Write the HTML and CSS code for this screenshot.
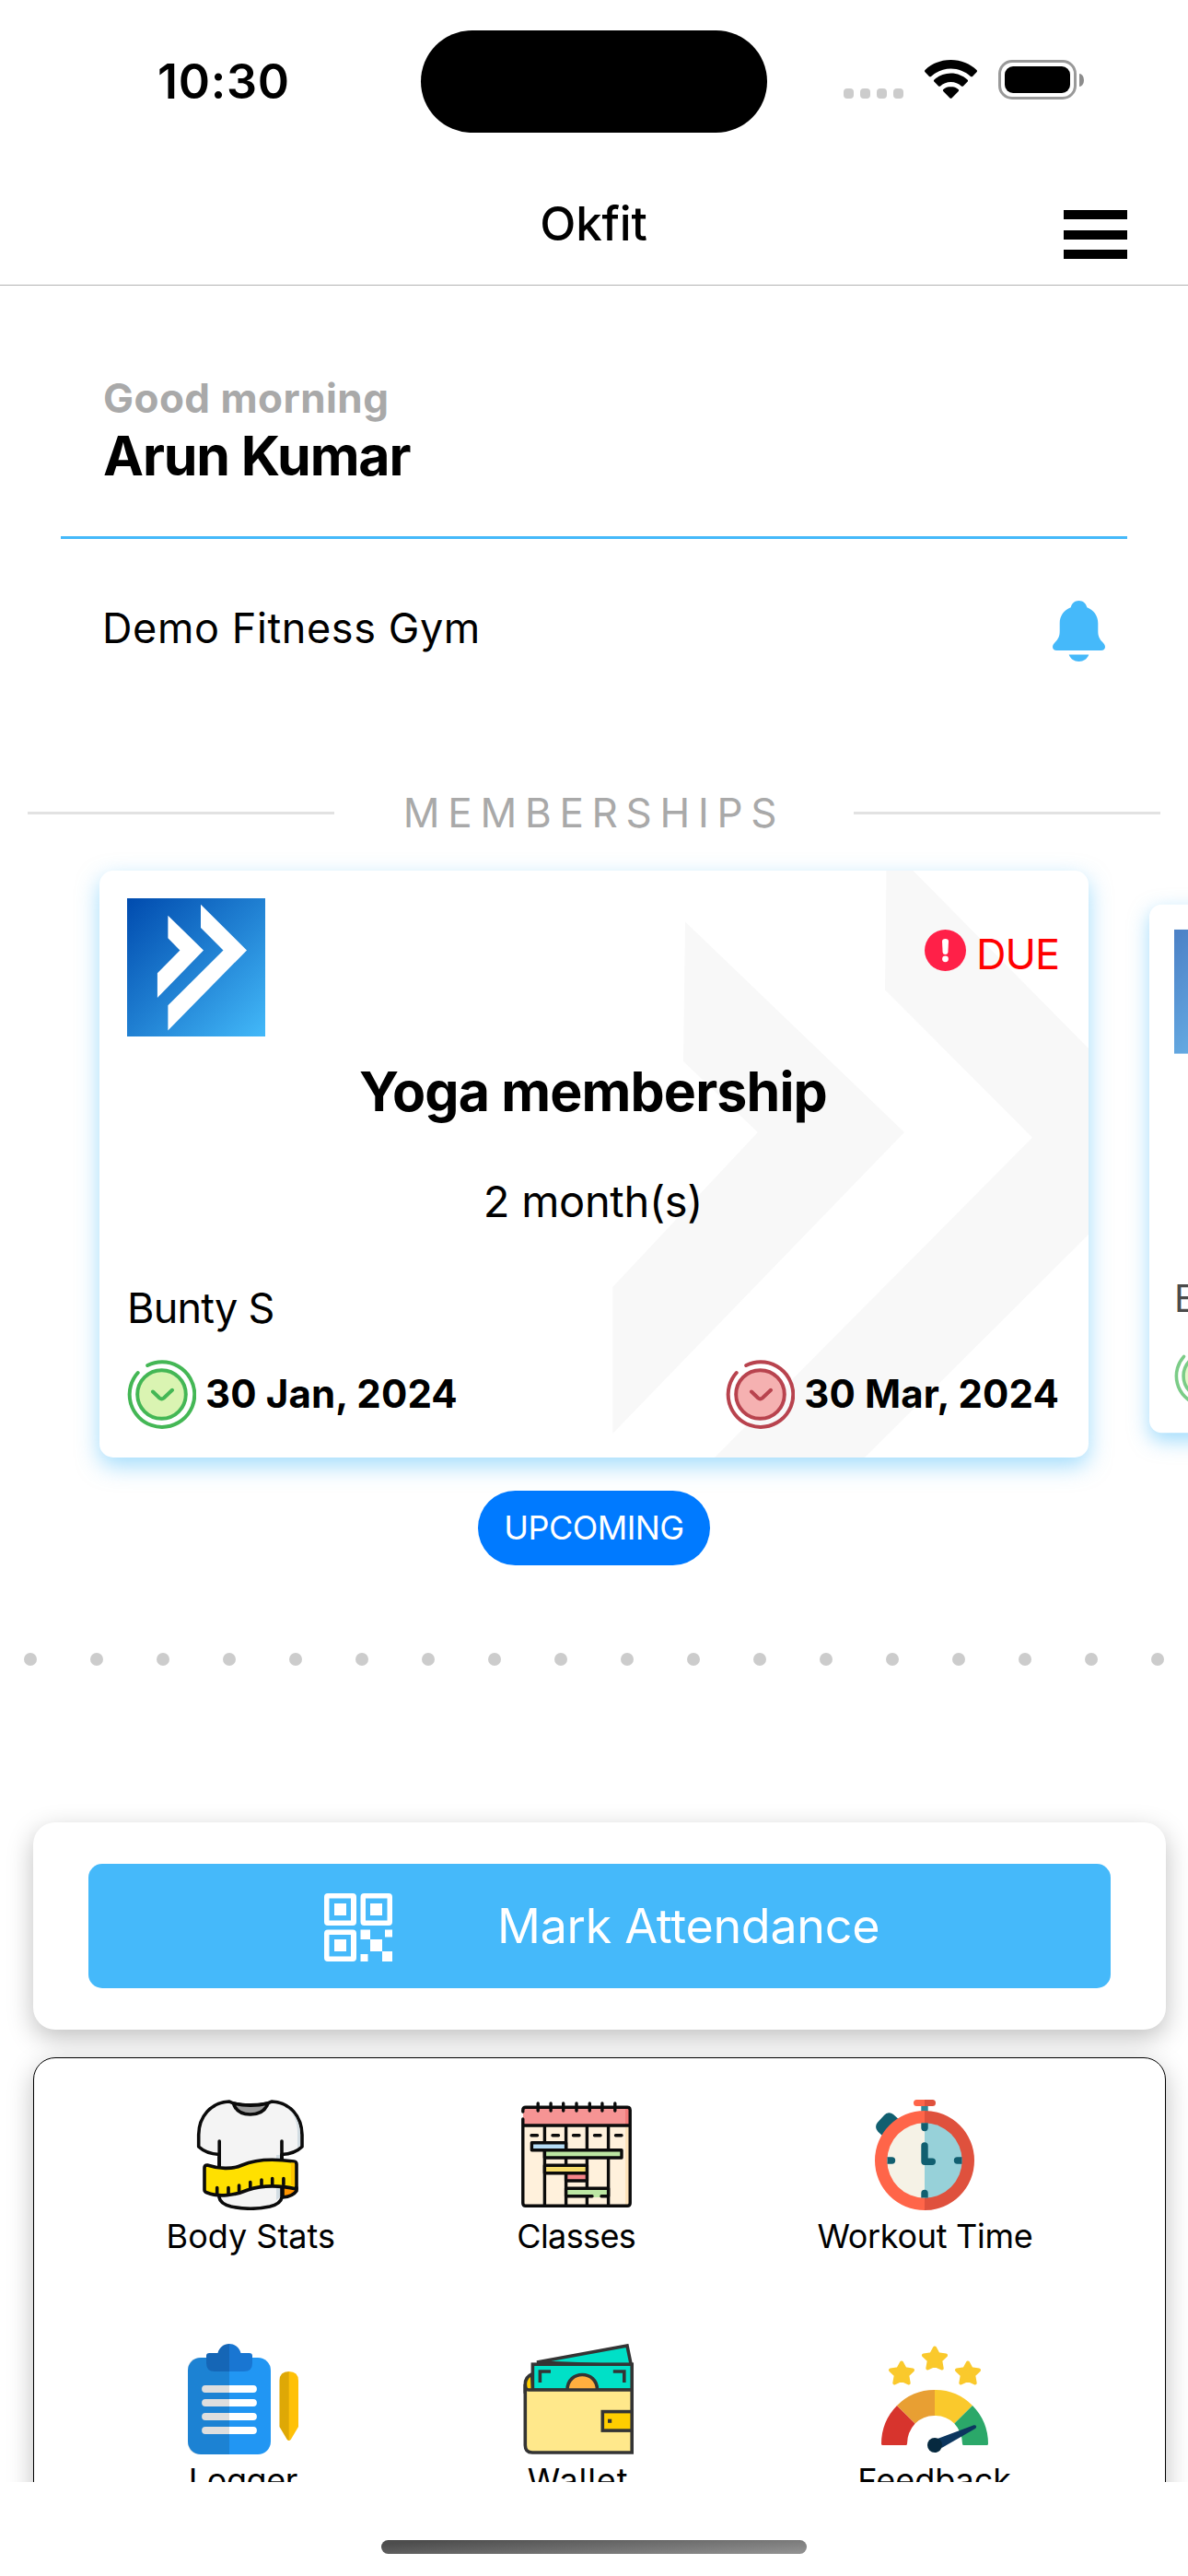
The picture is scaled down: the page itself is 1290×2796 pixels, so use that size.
FILE: index.html
```html
<!DOCTYPE html>
<html lang="en">
<head>
<meta charset="utf-8">
<title>Okfit</title>
<link rel="stylesheet" href="styles.css">
</head>
<body>
<svg class="defs" width="0" height="0" aria-hidden="true">
  <defs>
    <linearGradient id="brand" x1="0" y1="0" x2="1" y2="1">
      <stop offset="0" stop-color="#004bae"/><stop offset=".5" stop-color="#2080d2"/><stop offset="1" stop-color="#43b9f9"/>
    </linearGradient>
    <symbol id="logo" viewBox="0 0 150 150">
      <rect width="150" height="150" fill="url(#brand)"/>
      <path fill="#fff" d="M44.4 18.8 83 56.4 32.9 108.1V81.2L57.4 56.4 44.4 43.2ZM80 6.8 130 56.4 44.4 143.6V116.2L104.5 56.4 80 32Z"/>
    </symbol>
    <symbol id="check" viewBox="0 0 75 75">
      <circle class="check-face" cx="37.5" cy="37.5" r="26.3"/>
      <path d="M22.2 6A35.3 35.3 0 1 1 11.7 14M28 34.5l7.2 7q2.3 1.8 4.6 0l9.2-8.7"/>
    </symbol>
  </defs>
</svg>

<header class="status">
  <div class="status-time">10:30</div>
  <div class="island"></div>
  <div class="status-icons">
    <div class="cell"><i></i><i></i><i></i><i></i></div>
    <svg class="wifi" viewBox="0 0 57 42">
      <path d="M28.500 0C17.500 0 7.500 4.200 .5 11q-1 1.200 0 2.300L5 18q1 .7 2 0C13 12.500 20.500 9.500 28.500 9.500S44 12.500 50 18q1 .7 2 0l4.500-4.700q1-1.100 0-2.300C49.500 4.200 39.500 0 28.500 0Z"/>
      <path d="M28.500 14.500c-7 0-13.300 2.700-18 7-.8.8-.8 1.500 0 2.300l4.600 4.600q1 .8 2 0c3-2.700 7-4.300 11.400-4.300s8.400 1.600 11.400 4.300q1 .8 2 0l4.600-4.600c.8-.8.8-1.500 0-2.300-4.700-4.300-11-7-18-7Z"/>
      <path d="M28.500 29c-3.200 0-6 1.100-8.100 2.900-.8.8-.7 1.600 0 2.300l7.100 7.200q1 .9 2 0l7.100-7.200c.7-.7.8-1.500 0-2.300-2.100-1.800-4.900-2.900-8.100-2.900Z"/>
    </svg>
    <div class="battery"><div class="battery-case"><div class="battery-level"></div></div><div class="battery-cap"></div></div>
  </div>
</header>

<nav class="topbar">
  <h1>Okfit</h1>
  <div class="menu"><i></i><i></i><i></i></div>
</nav>

<main class="content">
  <section class="greeting">
    <p class="hello">Good morning</p>
    <p class="name">Arun Kumar</p>
  </section>
  <section class="gym">
    <p>Demo Fitness Gym</p>
    <svg class="bell" viewBox="0 0 57 66">
      <path d="M28.500 0c-4.300 0-7.800 2.800-8.800 7.200C12.500 9.800 7.700 16.500 7.700 24.500v8.500c0 5.500-1.500 8.500-4.900 12C.8 47 0 48.700 0 50.200 0 52.600 1.800 54 4.300 54h48.400c2.500 0 4.300-1.400 4.300-3.800 0-1.500-.8-3.200-2.800-5.200-3.400-3.500-4.900-6.500-4.900-12v-8.500c0-8-4.800-14.700-12-17.300C36.300 2.800 32.800 0 28.500 0Z"/>
      <path d="M17.700 58.500h21.600c-1.600 4.600-5.800 7.500-10.800 7.500s-9.200-2.900-10.800-7.500Z"/>
    </svg>
  </section>

  <h2 class="divider"><span>MEMBERSHIPS</span></h2>

  <section class="carousel">
    <article class="card">
      <svg class="watermark" viewBox="0 0 1074 637">
        <path d="M636 55.500 874 284 557.300 611V452L714.800 284 634 207ZM854.500 0H883.500L1074 193V395L831 637H668L1013 289.700 853 129.400Z"/>
      </svg>
      <div class="card-top">
        <svg class="logo"><use href="#logo"/></svg>
        <div class="due">
          <svg viewBox="0 0 45 45"><circle cx="22.500" cy="22.500" r="22.500" fill="#ff2048"/><path d="M19 12.500q0-2.500 3.500-2.500t3.500 2.500l-.6 12.300q-.3 2.200-2.900 2.200t-2.900-2.200Z" fill="#fff"/><circle cx="22.500" cy="31.800" r="3.400" fill="#fff"/></svg>
          <span>DUE</span>
        </div>
      </div>
      <h3>Yoga membership</h3>
      <p class="period">2 month(s)</p>
      <p class="trainer">Bunty S</p>
      <div class="dates">
        <div class="date start"><svg><use href="#check"/></svg><span>30 Jan, 2024</span></div>
        <div class="date end"><svg><use href="#check"/></svg><span>30 Mar, 2024</span></div>
      </div>
    </article>
    <article class="card next">
      <div class="card-body">
        <div class="card-top"><svg class="logo"><use href="#logo"/></svg></div>
        <p class="trainer">Bunty S</p>
        <div class="dates"><div class="date start"><svg><use href="#check"/></svg></div></div>
      </div>
    </article>
  </section>

  <div class="pill">UPCOMING</div>

  <div class="dots"><i></i><i></i><i></i><i></i><i></i><i></i><i></i><i></i><i></i><i></i><i></i><i></i><i></i><i></i><i></i><i></i><i></i><i></i></div>

  <section class="attendance">
    <div class="button">
      <svg class="qr" viewBox="0 0 74 74">
        <path fill-rule="evenodd" d="M4 0H31Q35 0 35 4V31Q35 35 31 35H4Q0 35 0 31V4Q0 0 4 0ZM5.500 5.500V29.500H29V5.500ZM11 11H24V24H11ZM43.500 0H70Q74 0 74 4V31Q74 35 70 35H43.500Q39.500 35 39.500 31V4Q39.500 0 43.500 0ZM45 5.500V29.500H68.500V5.500ZM50 11H63V24H50ZM4 39.500H31Q35 39.500 35 43.500V70Q35 74 31 74H4Q0 74 0 70V43.500Q0 39.500 4 39.500ZM5.500 45V68.500H29V45ZM11 50H24V63H11Z"/>
        <path d="M39.500 39.500H50V50H63V63H74V74H63V63H50V50H39.500ZM66 39.500H74V47.500H66ZM39.500 66H47.500V74H39.500Z"/>
      </svg>
      <span>Mark Attendance</span>
    </div>
  </section>

  <section class="grid">
    <div class="row">
      <div class="item">
        <svg viewBox="0 0 120 120" stroke="#0b0b0b" stroke-width="3.600" stroke-linejoin="round" stroke-linecap="round">
          <path fill="#f4f4f4" d="M37 2C17 3 4 18 3.700 38V51C9 56 17 59 26 59.500V106Q27 113 39 116Q60 120.500 81 116Q93 113 94 106V59.500C103 59 111 56 116 51V38C115.500 18 103 3 83 2C75 7 45 7 37 2Z"/>
          <path fill="#d3dde3" stroke="none" d="M99 8Q111 18 111 36V52L114 50V36Q112 17 99 8ZM88 60H92V66H88ZM88 96H92V106L88 109Z"/>
          <path fill="#9b9b9b" d="M41.500 4Q45 16 59.800 16T79 4Q60 8.500 41.500 4Z"/>
          <path fill="none" d="M26.200 45V72M94 45V66"/>
          <path fill="#ff9500" d="M95 94 110 95.500V99Q106 105 95 106Z"/>
          <path fill="#ffe000" d="M10 74Q10 71 13 71C25 75 40 76 51 71C67 64 85 64 107 67Q110 67.500 110 70V97C90 92.500 72 93 57 98C43 104 25 106 13 101Q10 100 10 98Z"/>
          <path fill="#ffc400" stroke="none" d="M104 68.500H108V94L104 93Z"/>
          <path fill="none" d="M23.700 95.500V102M36 95.500V103M47.600 93V99M59.800 89.500V96M72 87V93M83.700 85.500V92M95.900 85.500V92"/>
        </svg>
        <span>Body Stats</span>
      </div>
      <div class="item classes">
        <svg viewBox="0 0 120 120" stroke="#0b0b0b" stroke-width="3.400" stroke-linejoin="round" stroke-linecap="round">
          <rect x="1.800" y="8.300" width="116.400" height="107" rx="3" fill="#fff1dc" stroke="none"/>
          <path stroke="none" fill="#f69494" d="M2 9H118V28H2Z"/><path stroke="none" fill="#f37a7a" d="M113 10H117V27H113Z"/><path stroke="none" fill="#fde3bb" d="M113 30H117V114H113Z"/>
          <path fill="none" d="M1.800 21V112.300Q1.800 115.300 4.800 115.300H115.200Q118.200 115.300 118.200 112.300V11.300Q118.200 8.300 115.200 8.300H4.800Q1.800 8.300 1.800 11.300V13M1.800 28H118.200M25.400 28V115M48.600 28V115M71.400 28V115M94.600 28V115M18.200 4V12M32.100 4V12M45.700 4V12M60 4V12M74.300 4V12M87.900 4V12M101.800 4V12M11 38.700H17.500M34 38.700H40.500M56.500 38.700H63M79.500 38.700H86M102.500 38.700H109"/>
          <path fill="#b5dcf5" d="M11.400 46.700H48.600V54.700H11.400Z"/><path fill="#bce6a3" d="M25.400 54.700H109V63H25.400Z"/><path stroke="none" fill="#bce6a3" d="M48.600 96.300H94.600V106H48.600Z"/><path fill="none" d="M77 104.700H48.600V96.300H94.600V104.700H87"/>
          <path fill="#f7dc6b" d="M25.400 71.300H71.400V79.700H25.400Z"/><path fill="#f6858a" d="M48.600 79.700H71.400V88H48.600Z"/>
        </svg>
        <span>Classes</span>
      </div>
      <div class="item workout">
        <svg viewBox="0 0 120 120">
          <rect x="10.500" y="15.500" width="24" height="25" rx="7" transform="rotate(42 21 27)" fill="#115f70"/>
          <path fill="#2f8999" d="M56.300 6H63.700V13H56.300Z"/>
          <path fill="#ff6549" d="M60 0H51.500a3.500 3.500 0 0 0 0 7H60ZM60 12A54 54 0 0 0 60 120Z"/>
          <path fill="#df513d" d="M60 0H68.500a3.500 3.500 0 0 1 0 7H60ZM60 12A54 54 0 0 1 60 120Z"/>
          <path fill="#f5f2e6" d="M60 25.300A40.700 40.700 0 0 0 60 106.700Z"/><path fill="#97d1d9" d="M60 25.300A40.700 40.700 0 0 1 60 106.700Z"/>
          <path fill="#115f70" d="M56.300 25.300H63.700V30.500a3.700 3.700 0 0 1-7.400 0ZM56.300 106.500V101.500a3.700 3.700 0 0 1 7.400 0V106.500ZM19.500 62.300H24.500a3.700 3.700 0 0 1 0 7.400H19.500ZM100.500 62.300H95.500a3.700 3.700 0 0 0 0 7.400H100.500Z"/>
          <path fill="none" stroke="#115f70" stroke-width="7.400" stroke-linecap="round" stroke-linejoin="round" d="M60 50V67.300H68.300"/>
        </svg>
        <span>Workout Time</span>
      </div>
    </div>
    <div class="row">
      <div class="item logger">
        <svg viewBox="0 0 120 120">
          <rect y="15" width="90" height="105" rx="14" fill="#2196f3"/>
          <path fill="#1976d2" d="M23.500 10H32.500C34 4 39 0 45 0S56 4 57.500 10H66.500Q70 10 70 13V21Q70 30 61 30H29Q20 30 20 21V13Q20 10 23.500 10Z"/>
          <path fill="none" stroke="#fff" stroke-width="7.800" stroke-linecap="round" d="M19 49H71M19 64H71M19 79H71M19 94H71"/>
          <path fill="#ffc107" d="M99.500 40Q99.500 30 109.700 30T120 40V90L112 103.500Q109.700 106.500 107.500 103.500L99.500 90Z"/>
          <path opacity=".13" d="M45 0C39 0 34 4 32.500 10H23.500Q20 10 20 13V15H14Q0 15 0 29V106Q0 120 14 120H45ZM109.700 30Q99.500 30 99.500 40V90L107.500 103.500 109.700 105Z"/>
        </svg>
        <span>Logger</span>
      </div>
      <div class="item wallet">
        <svg viewBox="0 0 120 120" fill="none" stroke="#343434" stroke-width="3.600">
          <path fill="#ffcd00" d="M9.600 33Q2.300 36 2.300 44V52H11Z"/>
          <path fill="#00e0c7" d="M15 20 113 2 117.500 24Z"/>
          <rect x="10.400" y="22.200" width="107.800" height="28" fill="#00e0c7"/>
          <path fill="#ffaf3f" d="M48 50C48 28 80.500 28 80.500 50"/>
          <path d="M18.400 42V30H30M97.800 30H109.800V42"/>
          <path fill="#ffe88b" d="M2.300 44V110Q2.300 118 10 118H118.200V50H6Q2.300 50 2.300 44Z"/>
          <rect x="86.300" y="73.600" width="31.900" height="20.500" fill="#ffcd00"/><path fill="#343434" stroke="none" d="M92 81.700H96.200V85.800H92Z"/>
        </svg>
        <span>Wallet</span>
      </div>
      <div class="item feedback">
        <svg viewBox="0 0 120 120">
          <g fill="#fac92c" stroke="#fac92c" stroke-width="4" stroke-linejoin="round">
            <path id="star" d="M60 4.500 63.700 11.300 72 12.500 66.200 18 67.700 26.500 60 23 52.300 26.500 53.800 18 48 12.500 56.300 11.300Z"/>
            <use href="#star" x="-36" y="16"/><use href="#star" x="36" y="16"/>
          </g>
          <path fill="#d7342d" d="M19 67A58 59 0 0 0 2 108.500Q2 110 3.500 110H28.500Q30 110 30 108.500A30 32 0 0 1 38.700 86.500Z"/>
          <path fill="#e89f33" d="M19 67A58 60 0 0 1 60 50V78A30 31 0 0 0 38.700 86.500Z"/>
          <path fill="#fac92c" d="M60 50A58 60 0 0 1 101 67L81.300 86.500A30 31 0 0 0 60 78Z"/>
          <path fill="#2ba869" d="M101 67A58 59 0 0 1 118 108.500Q118 110 116.500 110H91.500Q90 110 90 108.500A30 32 0 0 0 81.300 86.500Z"/>
          <path fill="#0c365f" d="M63 103 102.500 88.300Q104.500 88 105 89.500T104 92L67.500 113Z"/><circle cx="60" cy="110" r="8" fill="#06293f"/>
        </svg>
        <span>Feedback</span>
      </div>
    </div>
  </section>
</main>

<footer class="home"><div class="home-bar"></div></footer>
</body>
</html>
```
FILE: styles.css
```css
* { box-sizing: border-box; }
body {
  margin: 0;
  width: 1290px;
  height: 2796px;
  overflow: hidden;
  background: #fff;
  color: #000;
  font-family: Inter, "Liberation Sans", sans-serif;
  display: flex;
  flex-direction: column;
}
h1, h2, h3, p { margin: 0; font-weight: 400; white-space: nowrap; }
svg { display: block; flex: none; }
.defs { position: absolute; }

/* status bar */
.status {
  flex: none;
  height: 177px;
  display: grid;
  grid-template-columns: 457px 376px 457px;
}
.status-time { padding: 57px 0 0 171px; font-size: 52px; line-height: 64px; font-weight: 600; letter-spacing: .7px; }
.island { margin-top: 33px; height: 111px; border-radius: 56px; background: #000; }
.status-icons { height: 108px; padding-left: 83px; display: flex; align-items: flex-end; }
.cell { display: flex; gap: 7px; margin: 0 23px 1px 0; }
.cell i { width: 11px; height: 11px; border-radius: 4px; background: #ccc; }
.wifi { width: 57px; height: 42px; margin: 0 23px 1px 0; }
.battery { display: flex; align-items: center; gap: 3px; }
.battery-case { width: 85px; height: 43px; padding: 4px; border: 3px solid #999; border-radius: 15px; }
.battery-level { height: 29px; border-radius: 9px; background: #000; }
.battery-cap { width: 5px; height: 14px; border-radius: 0 5px 5px 0 / 0 7px 7px 0; background: #8c8c8c; }

/* title bar */
.topbar {
  flex: none;
  height: 133px;
  border-bottom: 1px solid #b2b2b2;
  display: grid;
  grid-template-columns: 1fr auto 1fr;
  padding-right: 66px;
}
.topbar h1 { grid-column: 2; padding: 34px 0 0 65px; font-size: 51px; line-height: 64px; font-weight: 500; letter-spacing: -.2px; }
.menu { justify-self: end; width: 69px; height: 53px; margin-top: 51px; display: flex; flex-direction: column; justify-content: space-between; }
.menu i { height: 10px; background: #000; }

.content { height: 2384px; overflow: hidden; flex: none; }

.greeting { margin: 0 66px; padding: 95px 0 51px 46px; border-bottom: 3px solid #45b9fa; }
.hello { font-size: 44px; line-height: 54px; font-weight: 700; color: #a9a9a9; letter-spacing: .45px; }
.name { font-size: 59px; line-height: 72px; font-weight: 700; letter-spacing: -1.15px; }

.gym { display: flex; justify-content: space-between; padding: 67px 90px 0 111px; }
.gym p { font-size: 45px; line-height: 54px; padding-top: 3px; letter-spacing: .6px; }
.bell { width: 57px; height: 66px; fill: #45b9fa; }

.divider { display: flex; align-items: center; margin: 137px 30px 0; color: #a9a9a9; }
.divider::before, .divider::after { content: ""; width: 333px; height: 3px; background: #e2e2e2; }
.divider span { flex: 1; text-align: center; font-size: 44px; line-height: 54px; letter-spacing: 8.7px; }

/* membership cards */
.carousel { display: flex; gap: 66px; margin: 36px 0 0 108px; }
.card {
  position: relative;
  flex: none;
  width: 1074px;
  height: 637px;
  padding: 30px 32px 30px 30px;
  border-radius: 15px;
  background: #fff;
  box-shadow: 0 9px 24px rgba(69, 185, 250, .5);
}
.card > * { position: relative; }
.card > .watermark { position: absolute; inset: 0; width: 1074px; height: 637px; fill: #f8f8f8; }
.card-top { display: flex; justify-content: space-between; }
.logo { width: 150px; height: 150px; }
.due { display: flex; gap: 11px; padding-top: 34px; color: #f00; font-size: 45px; line-height: 54px; }
.due svg { width: 45px; height: 45px; }
.due span { letter-spacing: -1px; }
.card h3 { margin-top: 24px; font-size: 59px; line-height: 72px; font-weight: 700; text-align: center; letter-spacing: -.85px; }
.period { margin-top: 54px; font-size: 47px; line-height: 58px; text-align: center; letter-spacing: -.3px; }
.trainer { margin-top: 60px; font-size: 45px; line-height: 54px; letter-spacing: -.8px; }
.dates { display: flex; justify-content: space-between; margin-top: 29px; }
.date { display: flex; gap: 10px; font-size: 42px; line-height: 74px; font-weight: 700; letter-spacing: .15px; }
.date svg { width: 75px; height: 75px; fill: none; stroke-width: 4px; stroke-linecap: round; }
.start svg { stroke: #44b755; }
.end svg { stroke: #b8434e; }
.start { --face: #daf4b2; }
.end { --face: #f5b1b1; }
.check-face { fill: var(--face); }
.next { transform: translateY(5px) scale(.9); transform-origin: left center; }
.card-body { opacity: .7; }
.next .trainer { margin-top: 268px; }

.pill {
  width: 252px;
  height: 81px;
  margin: 36px auto 0;
  border-radius: 41px;
  background: #007aff;
  color: #fff;
  font-size: 36px;
  line-height: 80px;
  text-align: center;
  letter-spacing: -.55px;
}
.dots { display: flex; justify-content: space-between; margin: 95px 26px 0; }
.dots i { width: 14px; height: 14px; border-radius: 50%; background: #ccc; }

.attendance {
  margin: 170px 24px 0 36px;
  height: 225px;
  padding: 45px 60px;
  border-radius: 24px;
  background: #fff;
  box-shadow: 0 9px 28px rgba(0, 0, 0, .25);
}
.button { height: 135px; padding-left: 256px; border-radius: 15px; background: #45b9fa; color: #fff; display: flex; align-items: center; gap: 114px; }
.qr { width: 74px; height: 74px; margin-top: 2px; fill: #fff; }
.button span { font-size: 52px; line-height: 135px; letter-spacing: -.3px; white-space: nowrap; }

/* shortcuts */
.grid {
  margin: 30px 24px 0 36px;
  height: 700px;
  padding: 45px 45px;
  border: 1px solid #000;
  border-radius: 24px;
  background: #fff;
  box-shadow: 0 9px 28px rgba(0, 0, 0, .25);
}
.row { display: flex; justify-content: space-around; height: 265px; }
.item { display: flex; flex-direction: column; align-items: center; font-size: 36px; line-height: 50px; white-space: nowrap; }
.item svg { width: 120px; height: 120px; }
.item span { margin-top: 3px; }
.classes { letter-spacing: -.6px; }
.workout { letter-spacing: -.3px; }
.logger { letter-spacing: -.4px; }
.wallet { letter-spacing: .9px; }

.home { flex: 1; }
.home-bar { width: 462px; height: 15px; margin: 63px auto 0; border-radius: 8px; background: linear-gradient(176deg, #4d4d4d 10%, #909090 95%); }
```
